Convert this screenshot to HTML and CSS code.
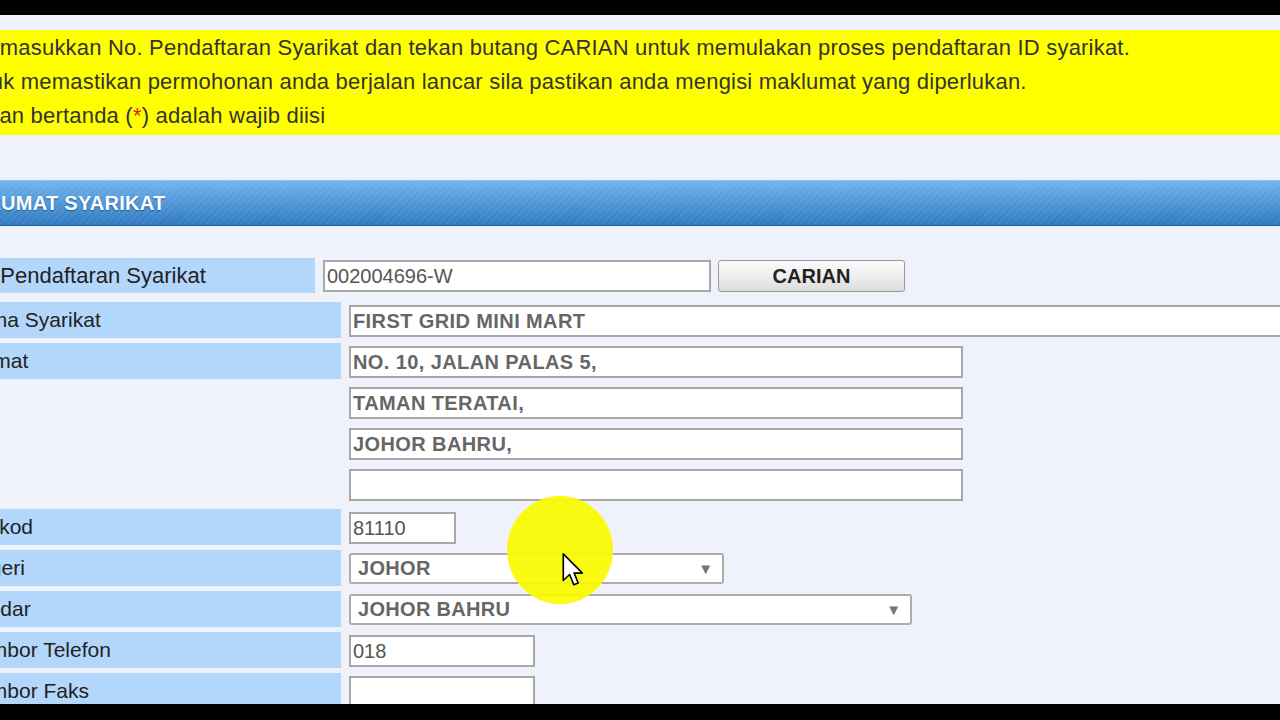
FILE: index.html
```html
<!DOCTYPE html>
<html lang="ms">
<head>
  <meta charset="UTF-8" />
  <meta name="viewport" content="width=device-width, initial-scale=1.0"/>
  <title>Pendaftaran ID Syarikat</title>
  <link rel="stylesheet" href="styles.css">
</head>
<body>
  <div class="screen">
    <div class="letterbox"></div>

    <div class="page">
      <div class="notice">
        <p>Sila masukkan No. Pendaftaran Syarikat dan tekan butang CARIAN untuk memulakan proses pendaftaran ID syarikat.</p>
        <p>Untuk memastikan permohonan anda berjalan lancar sila pastikan anda mengisi maklumat yang diperlukan.</p>
        <p>Medan bertanda (<span class="req">*</span>) adalah wajib diisi</p>
      </div>

      <div class="section-title">MAKLUMAT SYARIKAT</div>

      <div class="form">
        <div class="row row-search">
          <div class="label">No. Pendaftaran Syarikat</div>
          <div class="field inline">
            <input class="input w-regno" type="text" value="002004696-W">
            <button class="btn">CARIAN</button>
          </div>
        </div>

        <div class="row">
          <div class="label">Nama Syarikat</div>
          <div class="field">
            <input class="input ro w-full" type="text" value="FIRST GRID MINI MART" readonly>
          </div>
        </div>

        <div class="row">
          <div class="label">Alamat</div>
          <div class="field stack">
            <input class="input ro w-addr" type="text" value="NO. 10, JALAN PALAS 5," readonly>
            <input class="input ro w-addr" type="text" value="TAMAN TERATAI," readonly>
            <input class="input ro w-addr" type="text" value="JOHOR BAHRU," readonly>
            <input class="input ro w-addr" type="text" value="" readonly>
          </div>
        </div>

        <div class="row">
          <div class="label">Poskod</div>
          <div class="field">
            <input class="input w-pos" type="text" value="81110">
          </div>
        </div>

        <div class="row">
          <div class="label">Negeri</div>
          <div class="field">
            <div class="select w-negeri"><span>JOHOR</span><span class="arrow">&#9660;</span></div>
          </div>
        </div>

        <div class="row">
          <div class="label">Bandar</div>
          <div class="field">
            <div class="select w-bandar"><span>JOHOR BAHRU</span><span class="arrow">&#9660;</span></div>
          </div>
        </div>

        <div class="row">
          <div class="label">Nombor Telefon</div>
          <div class="field">
            <input class="input w-tel" type="text" value="018">
          </div>
        </div>

        <div class="row">
          <div class="label">Nombor Faks</div>
          <div class="field">
            <input class="input w-tel" type="text" value="">
          </div>
        </div>
      </div>
    </div>

    <div class="letterbox bottom"></div>

    <!-- recorder's click highlight + mouse pointer -->
    <div class="spotlight"></div>
    <svg class="cursor" width="26" height="34" viewBox="0 0 13 21">
      <path d="M0.5 0.5 L0.5 17 L4.4 13.3 L7 19.6 L9.7 18.5 L7.2 12.4 L12.3 12.4 Z" fill="#fff" stroke="#000" stroke-width="1" stroke-linejoin="round"/>
    </svg>
  </div>
</body>
</html>
```

FILE: styles.css
```css
body {
  margin: 0;
  font-family: 'Liberation Sans', Arial, sans-serif;
  background: #000;
  overflow: hidden;
}

.screen {
  position: relative;
  width: 1280px;
  height: 720px;
  display: flex;
  flex-direction: column;
  overflow: hidden;
}

.letterbox {
  height: 15px;
  background: #000;
  flex-shrink: 0;
}

.letterbox.bottom {
  height: 16px;
}

.page {
  flex: 1;
  background: #eff1fb;
  overflow: hidden;
}

.notice {
  margin: 15px 0 0 0;
  height: 105px;
  box-sizing: border-box;
  padding: 1px 0 0 0;
  background: #ffff00;
  color: #333;
  font-size: 22px;
  letter-spacing: 0.2px;
}

.notice p {
  margin: 0 0 0 -44px;
  line-height: 34px;
  white-space: nowrap;
}

.req {
  color: #e02020;
}

.section-title {
  margin: 45px 0 0 0;
  height: 46px;
  box-sizing: border-box;
  text-indent: -58px;
  line-height: 44px;
  color: #fff;
  font-size: 20px;
  font-weight: bold;
  letter-spacing: 0.3px;
  text-shadow: 0 1px 1px #1c5a92;
  border-top: 1px solid #8cc2f0;
  border-bottom: 1px solid #1f609c;
  background:
    repeating-linear-gradient(135deg, rgba(255,255,255,0.05) 0 2px, rgba(255,255,255,0) 2px 5px),
    linear-gradient(to bottom, #72b4ec 0%, #4f97d8 50%, #3079bf 100%);
}

.form {
  margin: 32px 0 0 -60px;
  display: flex;
  flex-direction: column;
  gap: 5px;
}

.row {
  display: flex;
  align-items: flex-start;
  gap: 8px;
}

.label {
  width: 401px;
  height: 36px;
  flex-shrink: 0;
  box-sizing: border-box;
  padding-left: 23px;
  display: flex;
  align-items: center;
  background: #b3d7fb;
  color: #222;
  font-size: 21px;
  white-space: nowrap;
}

.row-search {
  margin-bottom: 2px;
}

.row-search .label {
  width: 375px;
  height: 35px;
  font-size: 22px;
  padding-left: 20px;
}

.field {
  padding: 3px 0 1px 0;
}

.row-search .field {
  padding: 2px 0 3px 0;
}

.inline {
  display: flex;
  gap: 7px;
}

.stack {
  display: flex;
  flex-direction: column;
  gap: 9px;
  padding-bottom: 3px;
}

.input {
  height: 32px;
  box-sizing: border-box;
  margin: 0;
  padding: 0 2px;
  border: 2px solid #a8a8a8;
  background: #fff;
  font-family: 'Liberation Sans', Arial, sans-serif;
  font-size: 20px;
  color: #555;
  outline: none;
}

.input.ro {
  font-weight: bold;
  color: #666;
  letter-spacing: 0.4px;
}

.w-regno { width: 388px; }
.w-full { width: 1000px; }
.w-addr { width: 614px; }
.w-pos { width: 107px; }
.w-tel { width: 186px; }

.btn {
  width: 187px;
  height: 32px;
  border: 1px solid #9a9a9a;
  border-radius: 3px;
  background: linear-gradient(to bottom, #fbfbfb 0%, #eeeeee 50%, #dcdcdc 100%);
  font-family: 'Liberation Sans', Arial, sans-serif;
  font-size: 20px;
  font-weight: bold;
  color: #222;
  cursor: pointer;
}

.select {
  height: 31px;
  box-sizing: border-box;
  border: 2px solid #adadad;
  border-radius: 3px;
  background: #fff;
  display: flex;
  align-items: center;
  justify-content: space-between;
  padding: 0 9px 0 7px;
  font-size: 20px;
  font-weight: bold;
  color: #666;
  letter-spacing: 0.3px;
}

.select .arrow {
  font-size: 15px;
  color: #777;
  letter-spacing: 0;
}

.w-negeri { width: 375px; }
.w-bandar { width: 563px; }

.spotlight {
  position: absolute;
  left: 507px;
  top: 496px;
  width: 106px;
  height: 108px;
  border-radius: 50%;
  background: rgba(250, 250, 0, 0.93);
}

.cursor {
  position: absolute;
  left: 560px;
  top: 553px;
}
```
